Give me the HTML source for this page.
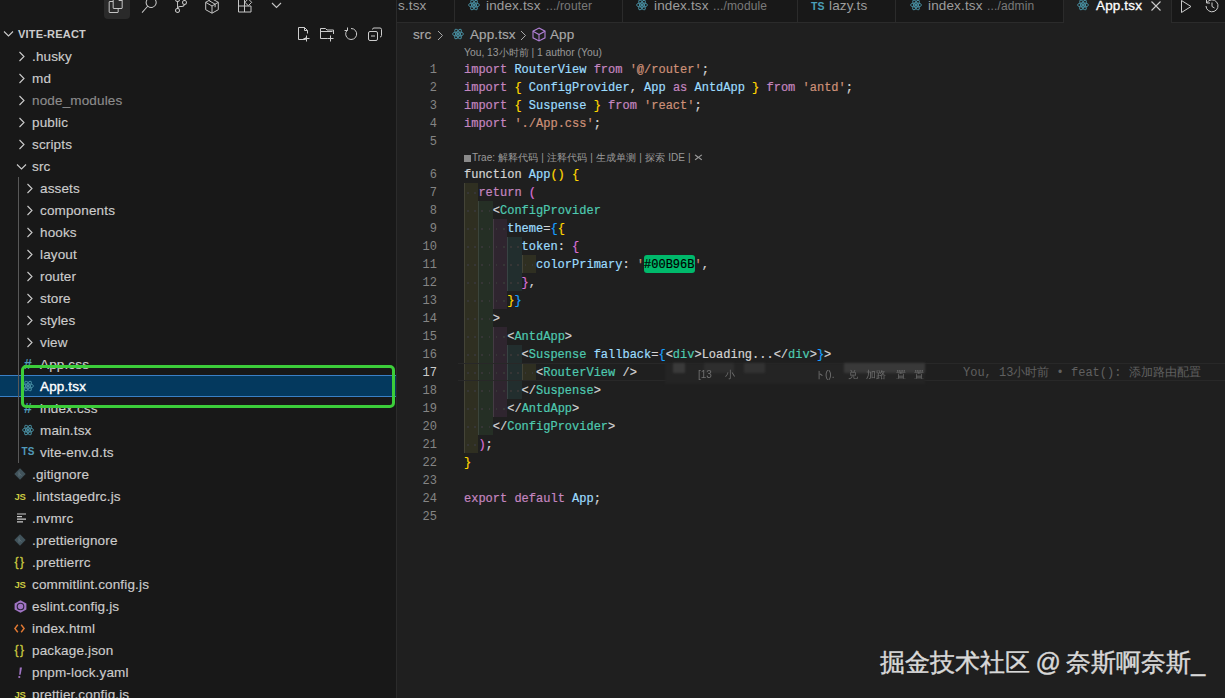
<!DOCTYPE html><html><head><meta charset="utf-8"><style>
*{margin:0;padding:0;box-sizing:border-box}
html,body{width:1225px;height:698px;overflow:hidden;background:#1f1f1f;font-family:"Liberation Sans",sans-serif;color:#cccccc;position:relative}
.A{position:absolute}
.row{position:absolute;left:0;width:396px;height:22px;font-size:13px;line-height:22px;white-space:nowrap}
.row .t{position:absolute;top:0}
.ln{position:absolute;left:397px;width:40px;text-align:right;font-family:"Liberation Mono",monospace;font-size:12px;line-height:18px;height:18px;color:#6e7681}
.cl{-webkit-text-stroke:0.2px currentColor;position:absolute;left:464px;font-family:"Liberation Mono",monospace;font-size:12px;line-height:18px;height:18px;white-space:pre;color:#d4d4d4}
.k{color:#c586c0}.v{color:#9cdcfe}.s{color:#ce9178}.y{color:#ffd700}.p{color:#da70d6}.b{color:#179fff}.tg{color:#4ec9b0}.w{color:#d4d4d4}.gr{color:#808080}.hex{color:#000}
svg{position:absolute;overflow:visible}
</style></head><body>
<div class="A" style="left:0;top:0;width:396px;height:698px;background:#181818"></div>
<div class="A" style="left:396px;top:0;width:1px;height:698px;background:#2b2b2b"></div>
<div class="A" style="left:104px;top:0;width:26px;height:19px;background:#2a2a2a;border-radius:0 0 4px 4px"></div>
<svg style="left:108px;top:-3px" width="16" height="16" viewBox="0 0 24 24" fill="#c5c5c5"><path d="M17.5 0h-9L7 1.5V6H2.5L1 7.5v15.07L2.5 24h12.07L16 22.57V18h4.7l1.3-1.43V4.5L17.5 0zm0 2.12l2.38 2.38H17.5V2.12zm-3 20.38h-12v-15H7v9.07L8.5 18h6v4.5zm6-6h-12v-15H16V6h4.5v10.5z"/></svg>
<svg style="left:141px;top:-3px" width="16" height="16" viewBox="0 0 24 24" fill="#c5c5c5"><path d="M15.25 0a8.25 8.25 0 0 0-6.18 13.72L1 22.88l1.12 1 8.05-9.12A8.251 8.251 0 1 0 15.25.01V0zm0 15a6.75 6.75 0 1 1 0-13.5 6.75 6.75 0 0 1 0 13.5z"/></svg>
<svg style="left:173px;top:-3px" width="16" height="16" viewBox="0 0 24 24" fill="#c5c5c5"><path d="M21.007 8.222A3.738 3.738 0 0 0 15.045 5.2a3.737 3.737 0 0 0 1.156 6.583 2.988 2.988 0 0 1-2.668 1.67h-2.99a4.456 4.456 0 0 0-2.989 1.165V7.4a3.737 3.737 0 1 0-1.494 0v9.117a3.776 3.776 0 1 0 1.816.099 2.99 2.99 0 0 1 2.668-1.667h2.99a4.484 4.484 0 0 0 4.223-3.039 3.736 3.736 0 0 0 3.25-3.687zM4.565 3.738a2.242 2.242 0 1 1 4.484 0 2.242 2.242 0 0 1-4.484 0zm4.484 16.441a2.242 2.242 0 1 1-4.484 0 2.242 2.242 0 0 1 4.484 0zm8.221-9.715a2.242 2.242 0 1 1 0-4.485 2.242 2.242 0 0 1 0 4.485z"/></svg>
<svg style="left:204px;top:-2px" width="16" height="16" viewBox="0 0 16 16" fill="none" stroke="#c5c5c5" stroke-width="1"><path d="M8 0.8l6.3 3.5v7.4L8 15.2l-6.3-3.5V4.3z"/><path d="M1.7 4.3L8 8l6.3-3.7M8 8v7.2M4.8 2.5l6.3 3.7v3"/></svg>
<svg style="left:237px;top:-3px" width="16" height="16" viewBox="0 0 16 16" fill="none" stroke="#c5c5c5" stroke-width="1"><path d="M1.5 2.5H7.5V9H14V15H1.5Z M1.5 9H7.5V15"/><path d="M11.3 1.9l3.4 3.4-3.4 3.4-3.4-3.4z"/></svg>
<svg style="left:271px;top:1px" width="11" height="8" viewBox="0 0 11 8" fill="none" stroke="#c5c5c5" stroke-width="1.1"><path d="M1 2l4.5 4.5L10 2"/></svg>
<svg style="left:3px;top:30px" width="11" height="8" viewBox="0 0 11 8" fill="none" stroke="#cccccc" stroke-width="1.1"><path d="M1 1.5l4.5 4.5L10 1.5"/></svg>
<div class="A" style="left:18px;top:23px;height:22px;line-height:22px;font-size:11px;font-weight:bold;color:#cccccc;letter-spacing:0.2px">VITE-REACT</div>
<svg style="left:296px;top:26px" width="16" height="16" viewBox="0 0 16 16" fill="none" stroke="#cccccc" stroke-width="1"><path d="M9.5 11.5v2h-7v-12h6l3 3v3"/><path d="M8.5 1.5v3h3"/><path d="M10.5 9.5v6M7.5 12.5h6"/></svg>
<svg style="left:319px;top:26px" width="16" height="16" viewBox="0 0 16 16" fill="none" stroke="#cccccc" stroke-width="1"><path d="M8.5 12.5h-7v-10h5l1.5 1.5h6.5v4"/><path d="M1.5 5.5h12"/><path d="M11.5 9.5v6M8.5 12.5h6"/></svg>
<svg style="left:343px;top:26px" width="16" height="16" viewBox="0 0 16 16" fill="none" stroke="#cccccc" stroke-width="1"><path d="M4.2 4.2A5.5 5.5 0 1 0 8 2.5"/><path d="M4.5 1.5v3h-3"/></svg>
<svg style="left:367px;top:26px" width="16" height="16" viewBox="0 0 16 16" fill="none" stroke="#cccccc" stroke-width="1"><rect x="1.5" y="5.5" width="9" height="9" rx="1.5"/><path d="M5.5 3.5a1.5 1.5 0 0 1 1.5-1.5h6a1.5 1.5 0 0 1 1.5 1.5v6a1.5 1.5 0 0 1-1.5 1.5"/><path d="M4 10h4"/></svg>
<div class="A" style="left:32px;top:46px;height:22px;line-height:22px;font-size:13.5px;letter-spacing:0.15px;color:#cccccc;white-space:nowrap;-webkit-text-stroke:0.15px #cccccc">.husky</div>
<svg style="left:18px;top:51px" width="8" height="11" viewBox="0 0 8 11" fill="none" stroke="#cccccc" stroke-width="1.1"><path d="M1.5 1l4.5 4.5L1.5 10"/></svg>
<div class="A" style="left:32px;top:68px;height:22px;line-height:22px;font-size:13.5px;letter-spacing:0.15px;color:#cccccc;white-space:nowrap;-webkit-text-stroke:0.15px #cccccc">md</div>
<svg style="left:18px;top:73px" width="8" height="11" viewBox="0 0 8 11" fill="none" stroke="#cccccc" stroke-width="1.1"><path d="M1.5 1l4.5 4.5L1.5 10"/></svg>
<div class="A" style="left:32px;top:90px;height:22px;line-height:22px;font-size:13.5px;letter-spacing:0.15px;color:#8c8c8c;white-space:nowrap;-webkit-text-stroke:0.15px #8c8c8c">node_modules</div>
<svg style="left:18px;top:95px" width="8" height="11" viewBox="0 0 8 11" fill="none" stroke="#cccccc" stroke-width="1.1"><path d="M1.5 1l4.5 4.5L1.5 10"/></svg>
<div class="A" style="left:32px;top:112px;height:22px;line-height:22px;font-size:13.5px;letter-spacing:0.15px;color:#cccccc;white-space:nowrap;-webkit-text-stroke:0.15px #cccccc">public</div>
<svg style="left:18px;top:117px" width="8" height="11" viewBox="0 0 8 11" fill="none" stroke="#cccccc" stroke-width="1.1"><path d="M1.5 1l4.5 4.5L1.5 10"/></svg>
<div class="A" style="left:32px;top:134px;height:22px;line-height:22px;font-size:13.5px;letter-spacing:0.15px;color:#cccccc;white-space:nowrap;-webkit-text-stroke:0.15px #cccccc">scripts</div>
<svg style="left:18px;top:139px" width="8" height="11" viewBox="0 0 8 11" fill="none" stroke="#cccccc" stroke-width="1.1"><path d="M1.5 1l4.5 4.5L1.5 10"/></svg>
<div class="A" style="left:32px;top:156px;height:22px;line-height:22px;font-size:13.5px;letter-spacing:0.15px;color:#cccccc;white-space:nowrap;-webkit-text-stroke:0.15px #cccccc">src</div>
<svg style="left:16px;top:163px" width="11" height="8" viewBox="0 0 11 8" fill="none" stroke="#cccccc" stroke-width="1.1"><path d="M1 1.5l4.5 4.5L10 1.5"/></svg>
<div class="A" style="left:40px;top:178px;height:22px;line-height:22px;font-size:13.5px;letter-spacing:0.15px;color:#cccccc;white-space:nowrap;-webkit-text-stroke:0.15px #cccccc">assets</div>
<svg style="left:26px;top:183px" width="8" height="11" viewBox="0 0 8 11" fill="none" stroke="#cccccc" stroke-width="1.1"><path d="M1.5 1l4.5 4.5L1.5 10"/></svg>
<div class="A" style="left:40px;top:200px;height:22px;line-height:22px;font-size:13.5px;letter-spacing:0.15px;color:#cccccc;white-space:nowrap;-webkit-text-stroke:0.15px #cccccc">components</div>
<svg style="left:26px;top:205px" width="8" height="11" viewBox="0 0 8 11" fill="none" stroke="#cccccc" stroke-width="1.1"><path d="M1.5 1l4.5 4.5L1.5 10"/></svg>
<div class="A" style="left:40px;top:222px;height:22px;line-height:22px;font-size:13.5px;letter-spacing:0.15px;color:#cccccc;white-space:nowrap;-webkit-text-stroke:0.15px #cccccc">hooks</div>
<svg style="left:26px;top:227px" width="8" height="11" viewBox="0 0 8 11" fill="none" stroke="#cccccc" stroke-width="1.1"><path d="M1.5 1l4.5 4.5L1.5 10"/></svg>
<div class="A" style="left:40px;top:244px;height:22px;line-height:22px;font-size:13.5px;letter-spacing:0.15px;color:#cccccc;white-space:nowrap;-webkit-text-stroke:0.15px #cccccc">layout</div>
<svg style="left:26px;top:249px" width="8" height="11" viewBox="0 0 8 11" fill="none" stroke="#cccccc" stroke-width="1.1"><path d="M1.5 1l4.5 4.5L1.5 10"/></svg>
<div class="A" style="left:40px;top:266px;height:22px;line-height:22px;font-size:13.5px;letter-spacing:0.15px;color:#cccccc;white-space:nowrap;-webkit-text-stroke:0.15px #cccccc">router</div>
<svg style="left:26px;top:271px" width="8" height="11" viewBox="0 0 8 11" fill="none" stroke="#cccccc" stroke-width="1.1"><path d="M1.5 1l4.5 4.5L1.5 10"/></svg>
<div class="A" style="left:40px;top:288px;height:22px;line-height:22px;font-size:13.5px;letter-spacing:0.15px;color:#cccccc;white-space:nowrap;-webkit-text-stroke:0.15px #cccccc">store</div>
<svg style="left:26px;top:293px" width="8" height="11" viewBox="0 0 8 11" fill="none" stroke="#cccccc" stroke-width="1.1"><path d="M1.5 1l4.5 4.5L1.5 10"/></svg>
<div class="A" style="left:40px;top:310px;height:22px;line-height:22px;font-size:13.5px;letter-spacing:0.15px;color:#cccccc;white-space:nowrap;-webkit-text-stroke:0.15px #cccccc">styles</div>
<svg style="left:26px;top:315px" width="8" height="11" viewBox="0 0 8 11" fill="none" stroke="#cccccc" stroke-width="1.1"><path d="M1.5 1l4.5 4.5L1.5 10"/></svg>
<div class="A" style="left:40px;top:332px;height:22px;line-height:22px;font-size:13.5px;letter-spacing:0.15px;color:#cccccc;white-space:nowrap;-webkit-text-stroke:0.15px #cccccc">view</div>
<svg style="left:26px;top:337px" width="8" height="11" viewBox="0 0 8 11" fill="none" stroke="#cccccc" stroke-width="1.1"><path d="M1.5 1l4.5 4.5L1.5 10"/></svg>
<div class="A" style="left:40px;top:354px;height:22px;line-height:22px;font-size:13.5px;letter-spacing:0.15px;color:#cccccc;white-space:nowrap;-webkit-text-stroke:0.15px #cccccc">App.css</div>
<div class="A" style="left:21px;top:353px;width:14px;height:22px;line-height:22px;font-size:14px;font-weight:bold;color:#519aba;text-align:center">#</div>
<div class="A" style="left:0;top:375px;width:396px;height:22px;background:#04395e;border-top:1px solid #3a80c6;border-bottom:1px solid #3a80c6"></div>
<div class="A" style="left:40px;top:376px;height:22px;line-height:22px;font-size:13.5px;letter-spacing:0.15px;color:#ffffff;white-space:nowrap;-webkit-text-stroke:0.35px #ffffff">App.tsx</div>
<svg style="left:22.0px;top:380.0px" width="12" height="12" viewBox="0 0 16 16" fill="none" stroke="#4a93a6" stroke-width="1.2"><ellipse cx="8" cy="8" rx="7.2" ry="2.7"/><ellipse cx="8" cy="8" rx="7.2" ry="2.7" transform="rotate(60 8 8)"/><ellipse cx="8" cy="8" rx="7.2" ry="2.7" transform="rotate(120 8 8)"/><circle cx="8" cy="8" r="1.2" fill="#4a93a6"/></svg>
<div class="A" style="left:40px;top:398px;height:22px;line-height:22px;font-size:13.5px;letter-spacing:0.15px;color:#cccccc;white-space:nowrap;-webkit-text-stroke:0.15px #cccccc">index.css</div>
<div class="A" style="left:21px;top:397px;width:14px;height:22px;line-height:22px;font-size:14px;font-weight:bold;color:#519aba;text-align:center">#</div>
<div class="A" style="left:40px;top:420px;height:22px;line-height:22px;font-size:13.5px;letter-spacing:0.15px;color:#cccccc;white-space:nowrap;-webkit-text-stroke:0.15px #cccccc">main.tsx</div>
<svg style="left:22.0px;top:424.0px" width="12" height="12" viewBox="0 0 16 16" fill="none" stroke="#4a93a6" stroke-width="1.2"><ellipse cx="8" cy="8" rx="7.2" ry="2.7"/><ellipse cx="8" cy="8" rx="7.2" ry="2.7" transform="rotate(60 8 8)"/><ellipse cx="8" cy="8" rx="7.2" ry="2.7" transform="rotate(120 8 8)"/><circle cx="8" cy="8" r="1.2" fill="#4a93a6"/></svg>
<div class="A" style="left:40px;top:442px;height:22px;line-height:22px;font-size:13.5px;letter-spacing:0.15px;color:#cccccc;white-space:nowrap;-webkit-text-stroke:0.15px #cccccc">vite-env.d.ts</div>
<div class="A" style="left:21px;top:441px;width:14px;height:22px;line-height:22px;font-size:10px;font-weight:bold;color:#519aba;text-align:center">TS</div>
<div class="A" style="left:32px;top:464px;height:22px;line-height:22px;font-size:13.5px;letter-spacing:0.15px;color:#cccccc;white-space:nowrap;-webkit-text-stroke:0.15px #cccccc">.gitignore</div>
<svg style="left:14px;top:468px" width="12" height="12" viewBox="0 0 12 12"><path d="M6 0.3L11.7 6 6 11.7 0.3 6z" fill="#41535b"/><path d="M5 3.5v5M5 5.5l2.5 2" stroke="#5d6f77" stroke-width="1" fill="none"/></svg>
<div class="A" style="left:32px;top:486px;height:22px;line-height:22px;font-size:13.5px;letter-spacing:0.15px;color:#cccccc;white-space:nowrap;-webkit-text-stroke:0.15px #cccccc">.lintstagedrc.js</div>
<div class="A" style="left:13px;top:486px;width:14px;height:22px;line-height:22px;font-size:9.5px;font-weight:bold;color:#cbcb41;text-align:center;letter-spacing:-0.4px">JS</div>
<div class="A" style="left:32px;top:508px;height:22px;line-height:22px;font-size:13.5px;letter-spacing:0.15px;color:#cccccc;white-space:nowrap;-webkit-text-stroke:0.15px #cccccc">.nvmrc</div>
<svg style="left:17px;top:513px" width="10" height="10" viewBox="0 0 10 10" stroke="#cccccc" stroke-width="1.2"><path d="M0 1h9M0 3.6h5M0 6.2h9M0 8.8h6"/></svg>
<div class="A" style="left:32px;top:530px;height:22px;line-height:22px;font-size:13.5px;letter-spacing:0.15px;color:#cccccc;white-space:nowrap;-webkit-text-stroke:0.15px #cccccc">.prettierignore</div>
<svg style="left:14px;top:534px" width="12" height="12" viewBox="0 0 12 12"><path d="M6 0.3L11.7 6 6 11.7 0.3 6z" fill="#41535b"/><path d="M5 3.5v5M5 5.5l2.5 2" stroke="#5d6f77" stroke-width="1" fill="none"/></svg>
<div class="A" style="left:32px;top:552px;height:22px;line-height:22px;font-size:13.5px;letter-spacing:0.15px;color:#cccccc;white-space:nowrap;-webkit-text-stroke:0.15px #cccccc">.prettierrc</div>
<div class="A" style="left:13px;top:551px;width:14px;height:22px;line-height:22px;font-size:12px;color:#cbcb41;text-align:center;letter-spacing:1.5px;-webkit-text-stroke:0.3px #cbcb41">{}</div>
<div class="A" style="left:32px;top:574px;height:22px;line-height:22px;font-size:13.5px;letter-spacing:0.15px;color:#cccccc;white-space:nowrap;-webkit-text-stroke:0.15px #cccccc">commitlint.config.js</div>
<div class="A" style="left:13px;top:574px;width:14px;height:22px;line-height:22px;font-size:9.5px;font-weight:bold;color:#cbcb41;text-align:center;letter-spacing:-0.4px">JS</div>
<div class="A" style="left:32px;top:596px;height:22px;line-height:22px;font-size:13.5px;letter-spacing:0.15px;color:#cccccc;white-space:nowrap;-webkit-text-stroke:0.15px #cccccc">eslint.config.js</div>
<svg style="left:13.5px;top:599.5px" width="13" height="13" viewBox="0 0 13 13"><path d="M6.5 0.3l5.9 3.3v5.8l-5.9 3.3-5.9-3.3V3.6z" fill="#a074c4"/><circle cx="6.5" cy="6.5" r="3.3" fill="none" stroke="#2a2238" stroke-width="1.1"/><circle cx="6.5" cy="6.5" r="2.2" fill="#a074c4"/></svg>
<div class="A" style="left:32px;top:618px;height:22px;line-height:22px;font-size:13.5px;letter-spacing:0.15px;color:#cccccc;white-space:nowrap;-webkit-text-stroke:0.15px #cccccc">index.html</div>
<svg style="left:14px;top:624px" width="11" height="9" viewBox="0 0 11 9" fill="none" stroke="#e37933" stroke-width="1.4"><path d="M3.8 0.8L0.9 4.5 3.8 8.2M7.2 0.8l2.9 3.7-2.9 3.7"/></svg>
<div class="A" style="left:32px;top:640px;height:22px;line-height:22px;font-size:13.5px;letter-spacing:0.15px;color:#cccccc;white-space:nowrap;-webkit-text-stroke:0.15px #cccccc">package.json</div>
<div class="A" style="left:13px;top:639px;width:14px;height:22px;line-height:22px;font-size:12px;color:#cbcb41;text-align:center;letter-spacing:1.5px;-webkit-text-stroke:0.3px #cbcb41">{}</div>
<div class="A" style="left:32px;top:662px;height:22px;line-height:22px;font-size:13.5px;letter-spacing:0.15px;color:#cccccc;white-space:nowrap;-webkit-text-stroke:0.15px #cccccc">pnpm-lock.yaml</div>
<svg style="left:17px;top:667px" width="6" height="12" viewBox="0 0 6 12"><path d="M2.8 0.5h2.2L3.6 7.8H2.2z" fill="#a074c4"/><circle cx="2.3" cy="10" r="1.1" fill="#a074c4"/></svg>
<div class="A" style="left:32px;top:684px;height:22px;line-height:22px;font-size:13.5px;letter-spacing:0.15px;color:#cccccc;white-space:nowrap;-webkit-text-stroke:0.15px #cccccc">prettier.config.js</div>
<div class="A" style="left:13px;top:684px;width:14px;height:22px;line-height:22px;font-size:9.5px;font-weight:bold;color:#cbcb41;text-align:center;letter-spacing:-0.4px">JS</div>
<div class="A" style="left:18px;top:177px;width:1px;height:286px;background:#585858"></div>
<div class="A" style="left:21px;top:365px;width:374px;height:43px;border:3px solid #3ccd3a;border-radius:5px"></div>
<div class="A" style="left:397px;top:0;width:828px;height:22px;background:#181818"></div>
<div class="A" style="left:397px;top:22px;width:828px;height:1px;background:#2b2b2b"></div>
<div class="A" style="left:454px;top:0;width:1px;height:22px;background:#2b2b2b"></div>
<div class="A" style="left:622px;top:0;width:1px;height:22px;background:#2b2b2b"></div>
<div class="A" style="left:797px;top:0;width:1px;height:22px;background:#2b2b2b"></div>
<div class="A" style="left:895px;top:0;width:1px;height:22px;background:#2b2b2b"></div>
<div class="A" style="left:1063px;top:0;width:1px;height:22px;background:#2b2b2b"></div>
<div class="A" style="left:398px;top:-2px;height:16px;line-height:16px;font-size:13.5px;letter-spacing:0.15px;white-space:nowrap;color:#9d9d9d">s.tsx</div>
<svg style="left:468.0px;top:-1.0px" width="12" height="12" viewBox="0 0 16 16" fill="none" stroke="#4a93a6" stroke-width="1.2"><ellipse cx="8" cy="8" rx="7.2" ry="2.7"/><ellipse cx="8" cy="8" rx="7.2" ry="2.7" transform="rotate(60 8 8)"/><ellipse cx="8" cy="8" rx="7.2" ry="2.7" transform="rotate(120 8 8)"/><circle cx="8" cy="8" r="1.2" fill="#4a93a6"/></svg>
<div class="A" style="left:486px;top:-2px;height:16px;line-height:16px;font-size:13.5px;letter-spacing:0.15px;white-space:nowrap;color:#9d9d9d">index.tsx</div>
<div class="A" style="left:546px;top:-2px;height:16px;line-height:16px;font-size:13.5px;letter-spacing:0.15px;white-space:nowrap;font-size:12px;color:#7a7a7a">.../router</div>
<svg style="left:636.0px;top:-1.0px" width="12" height="12" viewBox="0 0 16 16" fill="none" stroke="#4a93a6" stroke-width="1.2"><ellipse cx="8" cy="8" rx="7.2" ry="2.7"/><ellipse cx="8" cy="8" rx="7.2" ry="2.7" transform="rotate(60 8 8)"/><ellipse cx="8" cy="8" rx="7.2" ry="2.7" transform="rotate(120 8 8)"/><circle cx="8" cy="8" r="1.2" fill="#4a93a6"/></svg>
<div class="A" style="left:654px;top:-2px;height:16px;line-height:16px;font-size:13.5px;letter-spacing:0.15px;white-space:nowrap;color:#9d9d9d">index.tsx</div>
<div class="A" style="left:713px;top:-2px;height:16px;line-height:16px;font-size:13.5px;letter-spacing:0.15px;white-space:nowrap;font-size:12px;color:#7a7a7a">.../module</div>
<div class="A" style="left:811px;top:-2px;width:14px;height:16px;line-height:16px;font-size:10.5px;font-weight:bold;color:#4b9fb8">TS</div>
<div class="A" style="left:829px;top:-2px;height:16px;line-height:16px;font-size:13.5px;letter-spacing:0.15px;white-space:nowrap;color:#9d9d9d">lazy.ts</div>
<svg style="left:910.0px;top:-1.0px" width="12" height="12" viewBox="0 0 16 16" fill="none" stroke="#4a93a6" stroke-width="1.2"><ellipse cx="8" cy="8" rx="7.2" ry="2.7"/><ellipse cx="8" cy="8" rx="7.2" ry="2.7" transform="rotate(60 8 8)"/><ellipse cx="8" cy="8" rx="7.2" ry="2.7" transform="rotate(120 8 8)"/><circle cx="8" cy="8" r="1.2" fill="#4a93a6"/></svg>
<div class="A" style="left:928px;top:-2px;height:16px;line-height:16px;font-size:13.5px;letter-spacing:0.15px;white-space:nowrap;color:#9d9d9d">index.tsx</div>
<div class="A" style="left:987px;top:-2px;height:16px;line-height:16px;font-size:13.5px;letter-spacing:0.15px;white-space:nowrap;font-size:12px;color:#7a7a7a">.../admin</div>
<div class="A" style="left:1064px;top:0;width:107px;height:23px;background:#1f1f1f"></div>
<div class="A" style="left:1171px;top:0;width:1px;height:22px;background:#2b2b2b"></div>
<svg style="left:1077.0px;top:-1.0px" width="12" height="12" viewBox="0 0 16 16" fill="none" stroke="#4a93a6" stroke-width="1.2"><ellipse cx="8" cy="8" rx="7.2" ry="2.7"/><ellipse cx="8" cy="8" rx="7.2" ry="2.7" transform="rotate(60 8 8)"/><ellipse cx="8" cy="8" rx="7.2" ry="2.7" transform="rotate(120 8 8)"/><circle cx="8" cy="8" r="1.2" fill="#4a93a6"/></svg>
<div class="A" style="left:1096px;top:-2px;height:16px;line-height:16px;font-size:13.5px;letter-spacing:0.15px;white-space:nowrap;color:#ffffff;-webkit-text-stroke:0.3px #fff">App.tsx</div>
<svg style="left:1151px;top:1px" width="10" height="10" viewBox="0 0 10 10" stroke="#cccccc" stroke-width="1.1"><path d="M0.5 0.5l9 9M9.5 0.5l-9 9"/></svg>
<svg style="left:1180px;top:0px" width="12" height="13" viewBox="0 0 12 13" fill="none" stroke="#cccccc" stroke-width="1"><path d="M1.5 0.5v12l9.5-6z"/></svg>
<svg style="left:1204px;top:-2px" width="16" height="16" viewBox="0 0 16 16" fill="none" stroke="#cccccc" stroke-width="1"><path d="M3 4.5A6 6 0 1 1 2 8"/><path d="M2.5 1.5v3.5h3.5"/><path d="M8 4.5v4l2.5 1.5"/></svg>
<div class="A" style="left:413px;top:26px;height:18px;line-height:18px;font-size:13.5px;letter-spacing:0.1px;white-space:nowrap;color:#a9a9a9;-webkit-text-stroke:0.15px #a9a9a9">src</div>
<svg style="left:437px;top:30px" width="7" height="11" viewBox="0 0 7 11" fill="none" stroke="#a9a9a9" stroke-width="1"><path d="M1 1l4.5 4.5L1 10"/></svg>
<svg style="left:452.0px;top:28.0px" width="12" height="12" viewBox="0 0 16 16" fill="none" stroke="#4a93a6" stroke-width="1.2"><ellipse cx="8" cy="8" rx="7.2" ry="2.7"/><ellipse cx="8" cy="8" rx="7.2" ry="2.7" transform="rotate(60 8 8)"/><ellipse cx="8" cy="8" rx="7.2" ry="2.7" transform="rotate(120 8 8)"/><circle cx="8" cy="8" r="1.2" fill="#4a93a6"/></svg>
<div class="A" style="left:470px;top:26px;height:18px;line-height:18px;font-size:13.5px;letter-spacing:0.1px;white-space:nowrap;color:#a9a9a9;-webkit-text-stroke:0.15px #a9a9a9">App.tsx</div>
<svg style="left:520px;top:30px" width="7" height="11" viewBox="0 0 7 11" fill="none" stroke="#a9a9a9" stroke-width="1"><path d="M1 1l4.5 4.5L1 10"/></svg>
<svg style="left:532px;top:27px" width="14" height="15" viewBox="0 0 14 15" fill="none" stroke="#b180d7" stroke-width="1.1"><path d="M7 1l6 3.2v6.6L7 14l-6-3.2V4.2z"/><path d="M1 4.2l6 3.3 6-3.3M7 7.5V14"/></svg>
<div class="A" style="left:550px;top:26px;height:18px;line-height:18px;font-size:13.5px;letter-spacing:0.1px;white-space:nowrap;color:#a9a9a9;-webkit-text-stroke:0.15px #a9a9a9">App</div>
<div class="A" style="left:464px;top:46px;height:14px;line-height:14px;font-size:10.3px;color:#999999;white-space:nowrap">You, 13小时前 | 1 author (You)</div>
<div class="A" style="left:464.0px;top:183px;width:14.4px;height:18px;background:rgba(255,255,64,0.075);border-left:1px solid rgba(255,255,255,0.10)"></div>
<div class="A" style="left:467.0px;top:192px;width:1.5px;height:1.5px;background:#363636"></div><div class="A" style="left:474.2px;top:192px;width:1.5px;height:1.5px;background:#363636"></div>
<div class="A" style="left:464.0px;top:201px;width:14.4px;height:18px;background:rgba(255,255,64,0.075);border-left:1px solid rgba(255,255,255,0.10)"></div>
<div class="A" style="left:478.4px;top:201px;width:14.4px;height:18px;background:rgba(127,255,127,0.075);border-left:1px solid rgba(255,255,255,0.10)"></div>
<div class="A" style="left:467.0px;top:210px;width:1.5px;height:1.5px;background:#363636"></div><div class="A" style="left:474.2px;top:210px;width:1.5px;height:1.5px;background:#363636"></div><div class="A" style="left:481.4px;top:210px;width:1.5px;height:1.5px;background:#363636"></div><div class="A" style="left:488.6px;top:210px;width:1.5px;height:1.5px;background:#363636"></div>
<div class="A" style="left:464.0px;top:219px;width:14.4px;height:18px;background:rgba(255,255,64,0.075);border-left:1px solid rgba(255,255,255,0.10)"></div>
<div class="A" style="left:478.4px;top:219px;width:14.4px;height:18px;background:rgba(127,255,127,0.075);border-left:1px solid rgba(255,255,255,0.10)"></div>
<div class="A" style="left:492.8px;top:219px;width:14.4px;height:18px;background:rgba(255,127,255,0.075);border-left:1px solid rgba(255,255,255,0.10)"></div>
<div class="A" style="left:467.0px;top:228px;width:1.5px;height:1.5px;background:#363636"></div><div class="A" style="left:474.2px;top:228px;width:1.5px;height:1.5px;background:#363636"></div><div class="A" style="left:481.4px;top:228px;width:1.5px;height:1.5px;background:#363636"></div><div class="A" style="left:488.6px;top:228px;width:1.5px;height:1.5px;background:#363636"></div><div class="A" style="left:495.8px;top:228px;width:1.5px;height:1.5px;background:#363636"></div><div class="A" style="left:503.0px;top:228px;width:1.5px;height:1.5px;background:#363636"></div>
<div class="A" style="left:464.0px;top:237px;width:14.4px;height:18px;background:rgba(255,255,64,0.075);border-left:1px solid rgba(255,255,255,0.10)"></div>
<div class="A" style="left:478.4px;top:237px;width:14.4px;height:18px;background:rgba(127,255,127,0.075);border-left:1px solid rgba(255,255,255,0.10)"></div>
<div class="A" style="left:492.8px;top:237px;width:14.4px;height:18px;background:rgba(255,127,255,0.075);border-left:1px solid rgba(255,255,255,0.10)"></div>
<div class="A" style="left:507.2px;top:237px;width:14.4px;height:18px;background:rgba(79,236,236,0.075);border-left:1px solid rgba(255,255,255,0.10)"></div>
<div class="A" style="left:467.0px;top:246px;width:1.5px;height:1.5px;background:#363636"></div><div class="A" style="left:474.2px;top:246px;width:1.5px;height:1.5px;background:#363636"></div><div class="A" style="left:481.4px;top:246px;width:1.5px;height:1.5px;background:#363636"></div><div class="A" style="left:488.6px;top:246px;width:1.5px;height:1.5px;background:#363636"></div><div class="A" style="left:495.8px;top:246px;width:1.5px;height:1.5px;background:#363636"></div><div class="A" style="left:503.0px;top:246px;width:1.5px;height:1.5px;background:#363636"></div><div class="A" style="left:510.2px;top:246px;width:1.5px;height:1.5px;background:#363636"></div><div class="A" style="left:517.4px;top:246px;width:1.5px;height:1.5px;background:#363636"></div>
<div class="A" style="left:464.0px;top:255px;width:14.4px;height:18px;background:rgba(255,255,64,0.075);border-left:1px solid rgba(255,255,255,0.10)"></div>
<div class="A" style="left:478.4px;top:255px;width:14.4px;height:18px;background:rgba(127,255,127,0.075);border-left:1px solid rgba(255,255,255,0.10)"></div>
<div class="A" style="left:492.8px;top:255px;width:14.4px;height:18px;background:rgba(255,127,255,0.075);border-left:1px solid rgba(255,255,255,0.10)"></div>
<div class="A" style="left:507.2px;top:255px;width:14.4px;height:18px;background:rgba(79,236,236,0.075);border-left:1px solid rgba(255,255,255,0.10)"></div>
<div class="A" style="left:521.6px;top:255px;width:14.4px;height:18px;background:rgba(255,255,64,0.075);border-left:1px solid rgba(255,255,255,0.10)"></div>
<div class="A" style="left:467.0px;top:264px;width:1.5px;height:1.5px;background:#363636"></div><div class="A" style="left:474.2px;top:264px;width:1.5px;height:1.5px;background:#363636"></div><div class="A" style="left:481.4px;top:264px;width:1.5px;height:1.5px;background:#363636"></div><div class="A" style="left:488.6px;top:264px;width:1.5px;height:1.5px;background:#363636"></div><div class="A" style="left:495.8px;top:264px;width:1.5px;height:1.5px;background:#363636"></div><div class="A" style="left:503.0px;top:264px;width:1.5px;height:1.5px;background:#363636"></div><div class="A" style="left:510.2px;top:264px;width:1.5px;height:1.5px;background:#363636"></div><div class="A" style="left:517.4px;top:264px;width:1.5px;height:1.5px;background:#363636"></div><div class="A" style="left:524.6px;top:264px;width:1.5px;height:1.5px;background:#363636"></div><div class="A" style="left:531.8px;top:264px;width:1.5px;height:1.5px;background:#363636"></div>
<div class="A" style="left:464.0px;top:273px;width:14.4px;height:18px;background:rgba(255,255,64,0.075);border-left:1px solid rgba(255,255,255,0.10)"></div>
<div class="A" style="left:478.4px;top:273px;width:14.4px;height:18px;background:rgba(127,255,127,0.075);border-left:1px solid rgba(255,255,255,0.10)"></div>
<div class="A" style="left:492.8px;top:273px;width:14.4px;height:18px;background:rgba(255,127,255,0.075);border-left:1px solid rgba(255,255,255,0.10)"></div>
<div class="A" style="left:507.2px;top:273px;width:14.4px;height:18px;background:rgba(79,236,236,0.075);border-left:1px solid rgba(255,255,255,0.10)"></div>
<div class="A" style="left:467.0px;top:282px;width:1.5px;height:1.5px;background:#363636"></div><div class="A" style="left:474.2px;top:282px;width:1.5px;height:1.5px;background:#363636"></div><div class="A" style="left:481.4px;top:282px;width:1.5px;height:1.5px;background:#363636"></div><div class="A" style="left:488.6px;top:282px;width:1.5px;height:1.5px;background:#363636"></div><div class="A" style="left:495.8px;top:282px;width:1.5px;height:1.5px;background:#363636"></div><div class="A" style="left:503.0px;top:282px;width:1.5px;height:1.5px;background:#363636"></div><div class="A" style="left:510.2px;top:282px;width:1.5px;height:1.5px;background:#363636"></div><div class="A" style="left:517.4px;top:282px;width:1.5px;height:1.5px;background:#363636"></div>
<div class="A" style="left:464.0px;top:291px;width:14.4px;height:18px;background:rgba(255,255,64,0.075);border-left:1px solid rgba(255,255,255,0.10)"></div>
<div class="A" style="left:478.4px;top:291px;width:14.4px;height:18px;background:rgba(127,255,127,0.075);border-left:1px solid rgba(255,255,255,0.10)"></div>
<div class="A" style="left:492.8px;top:291px;width:14.4px;height:18px;background:rgba(255,127,255,0.075);border-left:1px solid rgba(255,255,255,0.10)"></div>
<div class="A" style="left:467.0px;top:300px;width:1.5px;height:1.5px;background:#363636"></div><div class="A" style="left:474.2px;top:300px;width:1.5px;height:1.5px;background:#363636"></div><div class="A" style="left:481.4px;top:300px;width:1.5px;height:1.5px;background:#363636"></div><div class="A" style="left:488.6px;top:300px;width:1.5px;height:1.5px;background:#363636"></div><div class="A" style="left:495.8px;top:300px;width:1.5px;height:1.5px;background:#363636"></div><div class="A" style="left:503.0px;top:300px;width:1.5px;height:1.5px;background:#363636"></div>
<div class="A" style="left:464.0px;top:309px;width:14.4px;height:18px;background:rgba(255,255,64,0.075);border-left:1px solid rgba(255,255,255,0.10)"></div>
<div class="A" style="left:478.4px;top:309px;width:14.4px;height:18px;background:rgba(127,255,127,0.075);border-left:1px solid rgba(255,255,255,0.10)"></div>
<div class="A" style="left:467.0px;top:318px;width:1.5px;height:1.5px;background:#363636"></div><div class="A" style="left:474.2px;top:318px;width:1.5px;height:1.5px;background:#363636"></div><div class="A" style="left:481.4px;top:318px;width:1.5px;height:1.5px;background:#363636"></div><div class="A" style="left:488.6px;top:318px;width:1.5px;height:1.5px;background:#363636"></div>
<div class="A" style="left:464.0px;top:327px;width:14.4px;height:18px;background:rgba(255,255,64,0.075);border-left:1px solid rgba(255,255,255,0.10)"></div>
<div class="A" style="left:478.4px;top:327px;width:14.4px;height:18px;background:rgba(127,255,127,0.075);border-left:1px solid rgba(255,255,255,0.10)"></div>
<div class="A" style="left:492.8px;top:327px;width:14.4px;height:18px;background:rgba(255,127,255,0.075);border-left:1px solid rgba(255,255,255,0.10)"></div>
<div class="A" style="left:467.0px;top:336px;width:1.5px;height:1.5px;background:#363636"></div><div class="A" style="left:474.2px;top:336px;width:1.5px;height:1.5px;background:#363636"></div><div class="A" style="left:481.4px;top:336px;width:1.5px;height:1.5px;background:#363636"></div><div class="A" style="left:488.6px;top:336px;width:1.5px;height:1.5px;background:#363636"></div><div class="A" style="left:495.8px;top:336px;width:1.5px;height:1.5px;background:#363636"></div><div class="A" style="left:503.0px;top:336px;width:1.5px;height:1.5px;background:#363636"></div>
<div class="A" style="left:464.0px;top:345px;width:14.4px;height:18px;background:rgba(255,255,64,0.075);border-left:1px solid rgba(255,255,255,0.10)"></div>
<div class="A" style="left:478.4px;top:345px;width:14.4px;height:18px;background:rgba(127,255,127,0.075);border-left:1px solid rgba(255,255,255,0.10)"></div>
<div class="A" style="left:492.8px;top:345px;width:14.4px;height:18px;background:rgba(255,127,255,0.075);border-left:1px solid rgba(255,255,255,0.10)"></div>
<div class="A" style="left:507.2px;top:345px;width:14.4px;height:18px;background:rgba(79,236,236,0.075);border-left:1px solid rgba(255,255,255,0.10)"></div>
<div class="A" style="left:467.0px;top:354px;width:1.5px;height:1.5px;background:#363636"></div><div class="A" style="left:474.2px;top:354px;width:1.5px;height:1.5px;background:#363636"></div><div class="A" style="left:481.4px;top:354px;width:1.5px;height:1.5px;background:#363636"></div><div class="A" style="left:488.6px;top:354px;width:1.5px;height:1.5px;background:#363636"></div><div class="A" style="left:495.8px;top:354px;width:1.5px;height:1.5px;background:#363636"></div><div class="A" style="left:503.0px;top:354px;width:1.5px;height:1.5px;background:#363636"></div><div class="A" style="left:510.2px;top:354px;width:1.5px;height:1.5px;background:#363636"></div><div class="A" style="left:517.4px;top:354px;width:1.5px;height:1.5px;background:#363636"></div>
<div class="A" style="left:464.0px;top:363px;width:14.4px;height:18px;background:rgba(255,255,64,0.075);border-left:1px solid rgba(255,255,255,0.10)"></div>
<div class="A" style="left:478.4px;top:363px;width:14.4px;height:18px;background:rgba(127,255,127,0.075);border-left:1px solid rgba(255,255,255,0.10)"></div>
<div class="A" style="left:492.8px;top:363px;width:14.4px;height:18px;background:rgba(255,127,255,0.075);border-left:1px solid rgba(255,255,255,0.10)"></div>
<div class="A" style="left:507.2px;top:363px;width:14.4px;height:18px;background:rgba(79,236,236,0.075);border-left:1px solid rgba(255,255,255,0.10)"></div>
<div class="A" style="left:521.6px;top:363px;width:14.4px;height:18px;background:rgba(255,255,64,0.075);border-left:1px solid rgba(255,255,255,0.10)"></div>
<div class="A" style="left:467.0px;top:372px;width:1.5px;height:1.5px;background:#363636"></div><div class="A" style="left:474.2px;top:372px;width:1.5px;height:1.5px;background:#363636"></div><div class="A" style="left:481.4px;top:372px;width:1.5px;height:1.5px;background:#363636"></div><div class="A" style="left:488.6px;top:372px;width:1.5px;height:1.5px;background:#363636"></div><div class="A" style="left:495.8px;top:372px;width:1.5px;height:1.5px;background:#363636"></div><div class="A" style="left:503.0px;top:372px;width:1.5px;height:1.5px;background:#363636"></div><div class="A" style="left:510.2px;top:372px;width:1.5px;height:1.5px;background:#363636"></div><div class="A" style="left:517.4px;top:372px;width:1.5px;height:1.5px;background:#363636"></div><div class="A" style="left:524.6px;top:372px;width:1.5px;height:1.5px;background:#363636"></div><div class="A" style="left:531.8px;top:372px;width:1.5px;height:1.5px;background:#363636"></div>
<div class="A" style="left:464.0px;top:381px;width:14.4px;height:18px;background:rgba(255,255,64,0.075);border-left:1px solid rgba(255,255,255,0.10)"></div>
<div class="A" style="left:478.4px;top:381px;width:14.4px;height:18px;background:rgba(127,255,127,0.075);border-left:1px solid rgba(255,255,255,0.10)"></div>
<div class="A" style="left:492.8px;top:381px;width:14.4px;height:18px;background:rgba(255,127,255,0.075);border-left:1px solid rgba(255,255,255,0.10)"></div>
<div class="A" style="left:507.2px;top:381px;width:14.4px;height:18px;background:rgba(79,236,236,0.075);border-left:1px solid rgba(255,255,255,0.10)"></div>
<div class="A" style="left:467.0px;top:390px;width:1.5px;height:1.5px;background:#363636"></div><div class="A" style="left:474.2px;top:390px;width:1.5px;height:1.5px;background:#363636"></div><div class="A" style="left:481.4px;top:390px;width:1.5px;height:1.5px;background:#363636"></div><div class="A" style="left:488.6px;top:390px;width:1.5px;height:1.5px;background:#363636"></div><div class="A" style="left:495.8px;top:390px;width:1.5px;height:1.5px;background:#363636"></div><div class="A" style="left:503.0px;top:390px;width:1.5px;height:1.5px;background:#363636"></div><div class="A" style="left:510.2px;top:390px;width:1.5px;height:1.5px;background:#363636"></div><div class="A" style="left:517.4px;top:390px;width:1.5px;height:1.5px;background:#363636"></div>
<div class="A" style="left:464.0px;top:399px;width:14.4px;height:18px;background:rgba(255,255,64,0.075);border-left:1px solid rgba(255,255,255,0.10)"></div>
<div class="A" style="left:478.4px;top:399px;width:14.4px;height:18px;background:rgba(127,255,127,0.075);border-left:1px solid rgba(255,255,255,0.10)"></div>
<div class="A" style="left:492.8px;top:399px;width:14.4px;height:18px;background:rgba(255,127,255,0.075);border-left:1px solid rgba(255,255,255,0.10)"></div>
<div class="A" style="left:467.0px;top:408px;width:1.5px;height:1.5px;background:#363636"></div><div class="A" style="left:474.2px;top:408px;width:1.5px;height:1.5px;background:#363636"></div><div class="A" style="left:481.4px;top:408px;width:1.5px;height:1.5px;background:#363636"></div><div class="A" style="left:488.6px;top:408px;width:1.5px;height:1.5px;background:#363636"></div><div class="A" style="left:495.8px;top:408px;width:1.5px;height:1.5px;background:#363636"></div><div class="A" style="left:503.0px;top:408px;width:1.5px;height:1.5px;background:#363636"></div>
<div class="A" style="left:464.0px;top:417px;width:14.4px;height:18px;background:rgba(255,255,64,0.075);border-left:1px solid rgba(255,255,255,0.10)"></div>
<div class="A" style="left:478.4px;top:417px;width:14.4px;height:18px;background:rgba(127,255,127,0.075);border-left:1px solid rgba(255,255,255,0.10)"></div>
<div class="A" style="left:467.0px;top:426px;width:1.5px;height:1.5px;background:#363636"></div><div class="A" style="left:474.2px;top:426px;width:1.5px;height:1.5px;background:#363636"></div><div class="A" style="left:481.4px;top:426px;width:1.5px;height:1.5px;background:#363636"></div><div class="A" style="left:488.6px;top:426px;width:1.5px;height:1.5px;background:#363636"></div>
<div class="A" style="left:464.0px;top:435px;width:14.4px;height:18px;background:rgba(255,255,64,0.075);border-left:1px solid rgba(255,255,255,0.10)"></div>
<div class="A" style="left:467.0px;top:444px;width:1.5px;height:1.5px;background:#363636"></div><div class="A" style="left:474.2px;top:444px;width:1.5px;height:1.5px;background:#363636"></div>
<div class="A" style="left:644px;top:255px;width:51px;height:18px;background:#00b96b;border-radius:3px"></div>
<div class="ln" style="top:61px;color:#858585">1</div>
<div class="cl" style="top:61px"><span class="k">import</span> <span class="v">RouterView</span> <span class="k">from</span> <span class="s">&#x27;@/router&#x27;</span><span class="w">;</span></div>
<div class="ln" style="top:79px;color:#858585">2</div>
<div class="cl" style="top:79px"><span class="k">import</span> <span class="y">{</span> <span class="v">ConfigProvider</span><span class="w">, </span><span class="v">App</span> <span class="k">as</span> <span class="v">AntdApp</span> <span class="y">}</span> <span class="k">from</span> <span class="s">&#x27;antd&#x27;</span><span class="w">;</span></div>
<div class="ln" style="top:97px;color:#858585">3</div>
<div class="cl" style="top:97px"><span class="k">import</span> <span class="y">{</span> <span class="v">Suspense</span> <span class="y">}</span> <span class="k">from</span> <span class="s">&#x27;react&#x27;</span><span class="w">;</span></div>
<div class="ln" style="top:115px;color:#858585">4</div>
<div class="cl" style="top:115px"><span class="k">import</span> <span class="s">&#x27;./App.css&#x27;</span><span class="w">;</span></div>
<div class="ln" style="top:133px;color:#858585">5</div>
<div class="cl" style="top:133px"></div>
<div class="ln" style="top:166px;color:#858585">6</div>
<div class="cl" style="top:166px"><span class="w">function</span> <span class="v">App</span><span class="y">()</span> <span class="y">{</span></div>
<div class="ln" style="top:184px;color:#858585">7</div>
<div class="cl" style="top:184px">  <span class="k">return</span> <span class="p">(</span></div>
<div class="ln" style="top:202px;color:#858585">8</div>
<div class="cl" style="top:202px">    <span class="w">&lt;</span><span class="tg">ConfigProvider</span></div>
<div class="ln" style="top:220px;color:#858585">9</div>
<div class="cl" style="top:220px">      <span class="v">theme</span><span class="w">=</span><span class="b">{</span><span class="y">{</span></div>
<div class="ln" style="top:238px;color:#858585">10</div>
<div class="cl" style="top:238px">        <span class="v">token</span><span class="w">: </span><span class="p">{</span></div>
<div class="ln" style="top:256px;color:#858585">11</div>
<div class="cl" style="top:256px">          <span class="v">colorPrimary</span><span class="w">: </span><span class="s">&#x27;</span><span class="hex">#00B96B</span><span class="s">&#x27;</span><span class="w">,</span></div>
<div class="ln" style="top:274px;color:#858585">12</div>
<div class="cl" style="top:274px">        <span class="p">}</span><span class="w">,</span></div>
<div class="ln" style="top:292px;color:#858585">13</div>
<div class="cl" style="top:292px">      <span class="y">}</span><span class="b">}</span></div>
<div class="ln" style="top:310px;color:#858585">14</div>
<div class="cl" style="top:310px">    <span class="w">&gt;</span></div>
<div class="ln" style="top:328px;color:#858585">15</div>
<div class="cl" style="top:328px">      <span class="w">&lt;</span><span class="tg">AntdApp</span><span class="w">&gt;</span></div>
<div class="ln" style="top:346px;color:#858585">16</div>
<div class="cl" style="top:346px">        <span class="w">&lt;</span><span class="tg">Suspense</span> <span class="v">fallback</span><span class="w">=</span><span class="b">{</span><span class="w">&lt;</span><span class="tg">div</span><span class="w">&gt;Loading...&lt;/</span><span class="tg">div</span><span class="w">&gt;</span><span class="b">}</span><span class="w">&gt;</span></div>
<div class="ln" style="top:364px;color:#cccccc">17</div>
<div class="cl" style="top:364px">          <span class="w">&lt;</span><span class="tg">RouterView</span> <span class="w">/&gt;</span></div>
<div class="ln" style="top:382px;color:#858585">18</div>
<div class="cl" style="top:382px">        <span class="w">&lt;/</span><span class="tg">Suspense</span><span class="w">&gt;</span></div>
<div class="ln" style="top:400px;color:#858585">19</div>
<div class="cl" style="top:400px">      <span class="w">&lt;/</span><span class="tg">AntdApp</span><span class="w">&gt;</span></div>
<div class="ln" style="top:418px;color:#858585">20</div>
<div class="cl" style="top:418px">    <span class="w">&lt;/</span><span class="tg">ConfigProvider</span><span class="w">&gt;</span></div>
<div class="ln" style="top:436px;color:#858585">21</div>
<div class="cl" style="top:436px">  <span class="p">)</span><span class="w">;</span></div>
<div class="ln" style="top:454px;color:#858585">22</div>
<div class="cl" style="top:454px"><span class="y">}</span></div>
<div class="ln" style="top:472px;color:#858585">23</div>
<div class="cl" style="top:472px"></div>
<div class="ln" style="top:490px;color:#858585">24</div>
<div class="cl" style="top:490px"><span class="k">export</span> <span class="k">default</span> <span class="v">App</span><span class="w">;</span></div>
<div class="ln" style="top:508px;color:#858585">25</div>
<div class="cl" style="top:508px"></div>
<div class="A" style="left:458px;top:363px;width:767px;height:18px;border-top:1px solid #282828;border-bottom:1px solid #282828"></div>
<div class="A" style="left:464px;top:151px;height:14px;line-height:14px;font-size:10px;word-spacing:0.4px;color:#999999;white-space:nowrap"><span style="display:inline-block;width:7px;height:7px;background:#8a8a8a;margin-right:1px;vertical-align:-0.5px"></span>Trae: 解释代码 | 注释代码 | 生成单测 | 探索 IDE | <span style="display:inline-block;transform:scaleX(1.3)">✕</span></div>
<div class="A" style="left:665px;top:363px;width:260px;height:21px;background:#242424;filter:blur(0.8px)"></div>
<div class="A" style="left:673px;top:363px;width:12px;height:10px;background:#3a3a3a;filter:blur(1.2px)"></div>
<div class="A" style="left:704px;top:363px;width:30px;height:10px;background:#2e2e2e;filter:blur(1.2px)"></div>
<div class="A" style="left:744px;top:363px;width:21px;height:10px;background:#323232;filter:blur(1.2px)"></div>
<div class="A" style="left:844px;top:363px;width:81px;height:10px;background:#393939;filter:blur(1.2px)"></div>
<div style="position:absolute;top:369px;height:12px;line-height:12px;font-family:'Liberation Sans',sans-serif;font-size:10px;color:#707070;white-space:pre;filter:blur(0.5px);left:698px">[13</div>
<div style="position:absolute;top:369px;height:12px;line-height:12px;font-family:'Liberation Sans',sans-serif;font-size:10px;color:#707070;white-space:pre;filter:blur(0.5px);left:725px">小</div>
<div style="position:absolute;top:369px;height:12px;line-height:12px;font-family:'Liberation Sans',sans-serif;font-size:10px;color:#707070;white-space:pre;filter:blur(0.5px);left:815px">ト().</div>
<div style="position:absolute;top:369px;height:12px;line-height:12px;font-family:'Liberation Sans',sans-serif;font-size:10px;color:#707070;white-space:pre;filter:blur(0.5px);left:848px">兑</div>
<div style="position:absolute;top:369px;height:12px;line-height:12px;font-family:'Liberation Sans',sans-serif;font-size:10px;color:#707070;white-space:pre;filter:blur(0.5px);left:866px">加路</div>
<div style="position:absolute;top:369px;height:12px;line-height:12px;font-family:'Liberation Sans',sans-serif;font-size:10px;color:#707070;white-space:pre;filter:blur(0.5px);left:896px">置</div>
<div style="position:absolute;top:369px;height:12px;line-height:12px;font-family:'Liberation Sans',sans-serif;font-size:10px;color:#707070;white-space:pre;filter:blur(0.5px);left:914px">置</div>
<div class="A" style="left:963px;top:364px;height:18px;line-height:18px;font-family:'Liberation Mono',monospace;font-size:12px;color:#606060;white-space:pre">You, 13小时前 • feat(): 添加路由配置</div>
<div class="A" style="left:880px;top:647px;height:30px;line-height:30px;font-size:25px;color:#d8d8d8;white-space:nowrap;word-spacing:-1.5px;-webkit-text-stroke:0.4px #d8d8d8">掘金技术社区 @ 奈斯啊奈斯_</div>
</body></html>
